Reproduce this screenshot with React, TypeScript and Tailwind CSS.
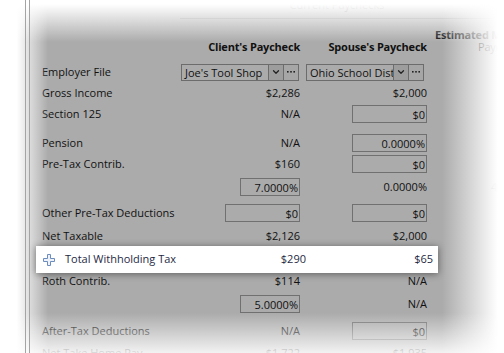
import React from 'react';
import { ChevronDown } from 'lucide-react';

function Box({ value, w = 'w-[75px]' }: { value: string; w?: string }) {
  return (
    <div className={`ml-auto ${w} h-[18px] border border-[#707070] flex items-center justify-end pr-[1px] leading-none`}>
      {value}
    </div>
  );
}

function Combo({ value, right }: { value: string; right?: boolean }) {
  return (
    <div className={`flex h-[17px] w-[119px] ${right ? 'ml-auto mr-[2px]' : ''}`}>
      <div className="w-[88px] border border-[#6c6c6c] pl-[3px] leading-[15px] overflow-hidden whitespace-nowrap text-left">{value}</div>
      <div className="w-[16px] -ml-px border border-[#6c6c6c] bg-[#9d9d9d] flex items-center justify-center">
        <ChevronDown size={10} strokeWidth={3} color="#222" />
      </div>
      <div className="w-[16px] -ml-px border border-[#6c6c6c] bg-[#a6a6a6] flex items-center justify-center">
        <svg width="10" height="4" viewBox="0 0 10 4">
          <rect x="1" y="1" width="1.6" height="1.6" fill="#222" />
          <rect x="4.2" y="1" width="1.6" height="1.6" fill="#222" />
          <rect x="7.4" y="1" width="1.6" height="1.6" fill="#222" />
        </svg>
      </div>
    </div>
  );
}

type Cell = string | React.ReactNode;

function Row({ label, a, b, c, h = 'h-[20px]', mt = '' }: { label?: string; a?: Cell; b?: Cell; c?: Cell; h?: string; mt?: string }) {
  return (
    <div className={`grid grid-cols-[139px_121px_127px_1fr] items-center pl-[42px] ${h} ${mt}`}>
      <div className="whitespace-nowrap">{label}</div>
      <div className="text-right pr-[2px]">{a}</div>
      <div className="text-right pr-[2px]">{b}</div>
      <div className="pl-[62px] text-[#555]">{c}</div>
    </div>
  );
}

export default function App() {
  return (
    <div className="relative w-[504px] h-[353px] overflow-hidden bg-[#ababab] font-['Open_Sans',sans-serif] text-[11px] text-[#111111]">
      {/* group caption */}
      <div className="h-[29px] pl-[180px]">
        <div className="h-[20px] border-b border-[#8f8f8f]">
          <div className="text-center pr-[10px] leading-[12px] -mt-[1px] text-[#555]">Current Paychecks</div>
        </div>
      </div>

      {/* headers */}
      <div className="grid grid-cols-[139px_121px_127px_1fr] items-end pl-[42px] h-[26px] font-bold tracking-[-0.2px]">
        <div />
        <div className="text-right pr-[2px] leading-[14px]">Client's Paycheck</div>
        <div className="text-right pr-[2px] leading-[14px]">Spouse's Paycheck</div>
        <div className="pl-[6px] leading-[12px] pb-[1px] whitespace-nowrap">
          <div>Estimated Monthly</div>
          <div className="pl-[43px] font-normal">Paycheck</div>
        </div>
      </div>

      <Row label="Employer File" a={<Combo value="Joe's Tool Shop" />} b={<Combo value="Ohio School District" right />} mt="mt-[8px]" />
      <Row label="Gross Income" a="$2,286" b="$2,000" mt="mt-[1px]" />
      <Row label="Section 125" a="N/A" b={<Box value="$0" />} mt="mt-[1px]" />
      <Row label="Pension" a="N/A" b={<Box value="0.0000%" />} mt="mt-[9px]" />
      <Row label="Pre-Tax Contrib." a="$160" b={<Box value="$0" />} mt="mt-[1px]" />
      <Row a={<Box value="7.0000%" w="w-[60px]" />} b="0.0000%" c="4.59%" mt="mt-[3px]" />
      <Row label="Other Pre-Tax Deductions" a={<Box value="$0" />} b={<Box value="$0" />} mt="mt-[6px]" />
      <Row label="Net Taxable" a="$2,126" b="$2,000" h="h-[19px]" mt="mt-[4px]" />

      {/* highlighted row */}
      <div className="relative z-20 ml-[36px] w-[402px] h-[27px] bg-white shadow-[0_1px_7px_rgba(0,0,0,0.45)] grid grid-cols-[145px_121px_127px] items-center pl-[6px] text-[#1f2a44]">
        <div className="flex items-center gap-[10px] whitespace-nowrap">
          <svg width="12" height="12" viewBox="0 0 12 12" className="ml-[1px]">
            <path d="M4.5 0.5H7.5V4.5H11.5V7.5H7.5V11.5H4.5V7.5H0.5V4.5H4.5Z" fill="#eef3fb" stroke="#6b8cbf" strokeWidth="1" />
          </svg>
          <span>Total Withholding Tax</span>
        </div>
        <div className="text-right pr-[2px]">$290</div>
        <div className="text-right pr-[2px]">$65</div>
      </div>

      <Row label="Roth Contrib." a="$114" b="N/A" h="h-[15px]" />
      <Row a={<Box value="5.0000%" w="w-[60px]" />} b="N/A" mt="mt-[6px]" />
      <Row label="After-Tax Deductions" a="N/A" b={<Box value="$0" />} mt="mt-[7px]" />
      <Row label="Net Take Home Pay" a="$1,722" b="$1,935" mt="mt-[2px]" />

      {/* soft fade round the dimmed window */}
      <div className="absolute z-10 inset-y-0 left-0 w-[48px] bg-linear-to-r from-white from-35% to-transparent" />
      <div className="absolute z-10 inset-x-0 top-0 h-[42px] bg-linear-to-b from-white from-10% to-transparent" />
      <div className="absolute z-10 inset-y-0 right-0 w-[62px] bg-linear-to-l from-white from-10% to-transparent" />
      <div className="absolute z-10 inset-x-0 bottom-0 h-[40px] bg-linear-to-t from-white/85 to-transparent" />

      {/* window frame lines */}
      <div className="absolute z-30 inset-y-0 left-[25px] w-px bg-[#a4a4a4]" />
      <div className="absolute z-30 inset-y-0 left-[29px] w-px bg-[#a4a4a4]" />
    </div>
  );
}
